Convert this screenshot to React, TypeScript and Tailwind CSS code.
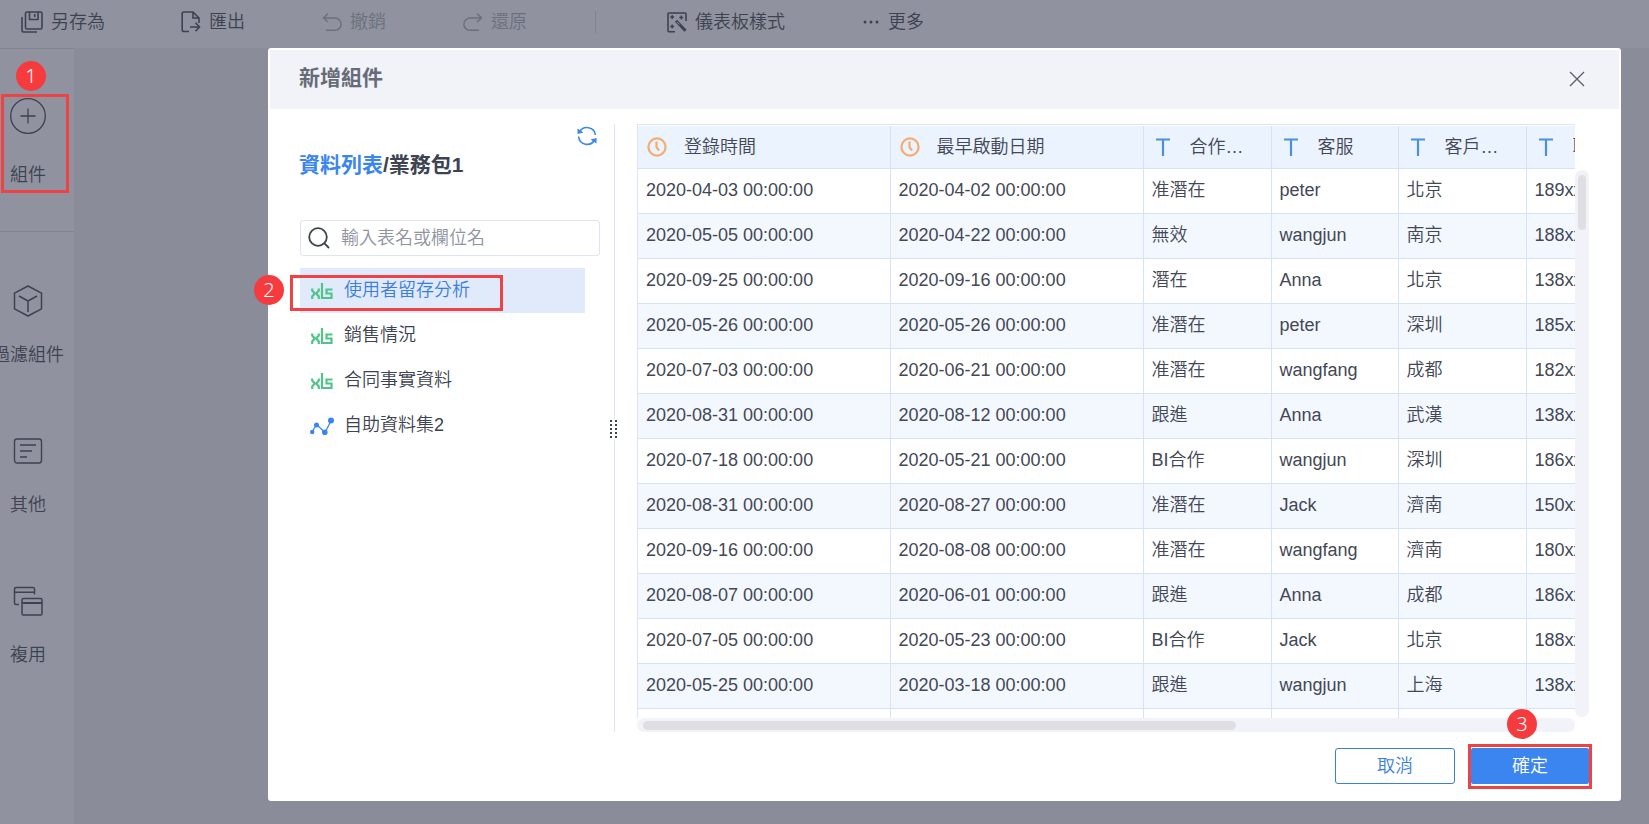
import React from "react";

type Kind = "time" | "text";

const columns: { label: string; kind: Kind }[] = [
  { label: "登錄時間", kind: "time" },
  { label: "最早啟動日期", kind: "time" },
  { label: "合作狀態", kind: "text" },
  { label: "客服", kind: "text" },
  { label: "客戶城市", kind: "text" },
  { label: "聯繫方式", kind: "text" },
];

const rows: string[][] = [
  ["2020-04-03 00:00:00", "2020-04-02 00:00:00", "准潛在", "peter", "北京", "189xxxx"],
  ["2020-05-05 00:00:00", "2020-04-22 00:00:00", "無效", "wangjun", "南京", "188xxxx"],
  ["2020-09-25 00:00:00", "2020-09-16 00:00:00", "潛在", "Anna", "北京", "138xxxx"],
  ["2020-05-26 00:00:00", "2020-05-26 00:00:00", "准潛在", "peter", "深圳", "185xxxx"],
  ["2020-07-03 00:00:00", "2020-06-21 00:00:00", "准潛在", "wangfang", "成都", "182xxxx"],
  ["2020-08-31 00:00:00", "2020-08-12 00:00:00", "跟進", "Anna", "武漢", "138xxxx"],
  ["2020-07-18 00:00:00", "2020-05-21 00:00:00", "BI合作", "wangjun", "深圳", "186xxxx"],
  ["2020-08-31 00:00:00", "2020-08-27 00:00:00", "准潛在", "Jack", "濟南", "150xxxx"],
  ["2020-09-16 00:00:00", "2020-08-08 00:00:00", "准潛在", "wangfang", "濟南", "180xxxx"],
  ["2020-08-07 00:00:00", "2020-06-01 00:00:00", "跟進", "Anna", "成都", "186xxxx"],
  ["2020-07-05 00:00:00", "2020-05-23 00:00:00", "BI合作", "Jack", "北京", "188xxxx"],
  ["2020-05-25 00:00:00", "2020-03-18 00:00:00", "跟進", "wangjun", "上海", "138xxxx"],
  ["", "", "", "", "", ""],
];

function SaveAsIcon() {
  return (
    <svg width="22" height="22" viewBox="0 0 22 22" fill="none" stroke="currentColor" strokeWidth="1.6">
      <rect x="4.5" y="1" width="16.5" height="17" rx="1.5" />
      <path d="M8.5 1v7.5h8.500V1M13.700 3v3M1 6v13.500q0 1.500 1.500 1.500H16" />
    </svg>
  );
}

function ExportIcon() {
  return (
    <svg width="20" height="22" viewBox="0 0 20 22" fill="none" stroke="currentColor" strokeWidth="1.6">
      <path d="M8 20.500H3Q1.200 20.500 1.200 19V2.500Q1.200 1 3 1H12L18 7v5M12 1v6h6M9 16h9.500M14.500 11.800l4 4.200-4 4.200" />
    </svg>
  );
}

function UndoIcon() {
  return (
    <svg width="20" height="20" viewBox="0 0 20 20" fill="none" stroke="currentColor" strokeWidth="1.500">
      <path d="M6 1.500L1.500 6L6 10M1.500 6H13a6 6 0 0 1 0 12.300H4" />
    </svg>
  );
}

function RedoIcon() {
  return (
    <svg width="20" height="20" viewBox="0 0 20 20" fill="none" stroke="currentColor" strokeWidth="1.500">
      <path d="M14 1.500L18.500 6L14 10M18.500 6H7a6 6 0 0 0 0 12.300H16" />
    </svg>
  );
}

function StyleIcon() {
  return (
    <svg width="20" height="21" viewBox="0 0 20 21" fill="none" stroke="currentColor" strokeWidth="1.600">
      <path d="M8 19.800H2Q1 19.800 1 18.800V2Q1 1 2 1H18Q19 1 19 2V9" />
      <path d="M5.200 3v4M3.200 5h4M14.300 3.500v4M12.300 5.500h4M5.200 12.500v4M3.200 14.500h4" strokeWidth="1.400" />
      <path d="M9 8.800L18.500 18.800" strokeWidth="3" />
      <path d="M10 9.800l2.500 2.600" stroke="#90939f" strokeWidth="1" />
    </svg>
  );
}

function MoreIcon() {
  return (
    <svg width="17" height="20" viewBox="0 0 17 20" fill="currentColor">
      <circle cx="2" cy="10" r="1.500" />
      <circle cx="8" cy="10" r="1.500" />
      <circle cx="14" cy="10" r="1.500" />
    </svg>
  );
}

function PlusCircleIcon() {
  return (
    <svg width="36" height="36" viewBox="0 0 36 36" fill="none" stroke="currentColor" strokeWidth="1.300">
      <circle cx="18" cy="18" r="17.300" />
      <path d="M10.500 18h15M18 10.500v15" />
    </svg>
  );
}

function CubeIcon() {
  return (
    <svg width="30" height="32" viewBox="0 0 30 32" fill="none" stroke="currentColor" strokeWidth="1.500" strokeLinejoin="round">
      <path d="M15 1L28.500 8.200V23.800L15 31L1.500 23.800V8.200Z" />
      <path d="M6 11l9 5 9-5M15 16v11" />
    </svg>
  );
}

function NoteIcon() {
  return (
    <svg width="30" height="32" viewBox="0 0 30 32" fill="none" stroke="currentColor" strokeWidth="1.400">
      <rect x="1.500" y="4" width="27" height="24" rx="2.500" />
      <path d="M7 10h16M7 16h12M7 22h7" />
    </svg>
  );
}

function ReuseIcon() {
  return (
    <svg width="30" height="32" viewBox="0 0 30 32" fill="none" stroke="currentColor" strokeWidth="1.500">
      <path d="M6 19.500H3Q1.500 19.500 1.500 18V4Q1.500 2.500 3 2.500H20Q21.500 2.500 21.500 4V9.500M1.500 7.200H21.500" />
      <rect x="9" y="13.500" width="20" height="16.500" rx="1.500" />
      <path d="M9 18H29" strokeWidth="2" />
    </svg>
  );
}

function RefreshIcon() {
  return (
    <svg width="20" height="20" viewBox="0 0 20 20" fill="none" stroke="#3b85ee" strokeWidth="1.600">
      <path d="M2.500 6A8.500 8.500 0 0 1 18.400 9M17.500 14A8.500 8.500 0 0 1 1.600 10.500" />
      <path d="M0.500 2.500V8L6.500 6.500ZM19.500 17.500V12L13.500 13.500Z" fill="#3b85ee" stroke="none" />
    </svg>
  );
}

function SearchIcon() {
  return (
    <svg width="22" height="22" viewBox="0 0 22 22" fill="none" stroke="#3d4351" strokeWidth="1.800">
      <circle cx="10" cy="10" r="8.800" />
      <path d="M16.200 16.200L21 21" />
    </svg>
  );
}

function XlsIcon() {
  return (
    <svg width="24" height="18" viewBox="0 0 24 18" fill="none" stroke="#50c48a" strokeWidth="2.200">
      <path d="M2.200 6.500V8.500L4.800 11.500L2.200 14.500V17M8.800 6.500V8.500L6.200 11.500L8.800 14.500V17M4 11.500H7" />
      <path d="M12 1V16H14.500" />
      <path d="M22.500 7.500H16.500V11.500H21.500V16H14" />
    </svg>
  );
}

function FlowIcon() {
  return (
    <svg width="24" height="18" viewBox="0 0 24 18" fill="#3b85ee" stroke="#3b85ee">
      <path d="M2 15L6.500 7.500L15 15.500L21 4" fill="none" strokeWidth="1.300" />
      <g stroke="none">
        <circle cx="2.200" cy="15" r="2.200" />
        <circle cx="6.500" cy="8" r="2.500" />
        <circle cx="14.800" cy="15.200" r="2.800" />
        <circle cx="21" cy="3.500" r="3" />
      </g>
    </svg>
  );
}

function ClockIcon() {
  return (
    <svg className="shrink-0" width="20" height="20" viewBox="0 0 20 20" fill="none" stroke="#f3ac72">
      <circle cx="10" cy="10" r="8.600" strokeWidth="2.200" />
      <path d="M9.500 4.500V10.200L12 13.500" strokeWidth="2.200" />
    </svg>
  );
}

function TextIcon() {
  return (
    <svg className="shrink-0" width="20" height="20" viewBox="0 0 20 20" fill="none" stroke="#4a8fe0" strokeWidth="2.200">
      <path d="M3 2.500H17M10 2.500V19" />
    </svg>
  );
}

function CloseIcon() {
  return (
    <svg width="16" height="16" viewBox="0 0 16 16" fill="none" stroke="#5c616d" strokeWidth="1.400">
      <path d="M1 1L15 15M15 1L1 15" />
    </svg>
  );
}

function Badge({ n, className }: { n: number; className: string }) {
  return (
    <span
      className={`absolute z-20 flex size-[30px] items-center justify-center rounded-full bg-[#f63b3f] font-['Noto_Sans'] text-xl leading-none text-white ${className}`}
    >
      {n}
    </span>
  );
}

function ToolButton({ icon, label, disabled, className = "" }: { icon: React.ReactNode; label: string; disabled?: boolean; className?: string }) {
  return (
    <button type="button" disabled={disabled} className={`flex h-6 items-center gap-2 whitespace-nowrap disabled:text-[#6c707c] ${className}`}>
      {icon}
      {label}
    </button>
  );
}

function SideButton({ icon, label, className }: { icon: React.ReactNode; label: string; className: string }) {
  return (
    <button type="button" className={`flex w-14 flex-col items-center justify-between whitespace-nowrap ${className}`}>
      {icon}
      <span className="flex w-full justify-center leading-6">{label}</span>
    </button>
  );
}

const sources = [
  { label: "使用者留存分析", icon: <XlsIcon />, selected: true },
  { label: "銷售情況", icon: <XlsIcon />, selected: false },
  { label: "合同事實資料", icon: <XlsIcon />, selected: false },
  { label: "自助資料集2", icon: <FlowIcon />, selected: false },
];

export default function App() {
  return (
    <div className="relative flex min-h-screen flex-col overflow-hidden bg-[#8a8c99] font-['Liberation_Sans','Noto_Sans_CJK_TC',sans-serif] text-lg font-[350] text-[#3d4250]">
      <header className="flex h-12 items-center bg-[#90939f] pb-1 pl-[21px]">
        <ToolButton icon={<SaveAsIcon />} label="另存為" />
        <ToolButton icon={<ExportIcon />} label="匯出" className="ml-[76px]" />
        <ToolButton icon={<UndoIcon />} label="撤銷" disabled className="ml-[77px]" />
        <ToolButton icon={<RedoIcon />} label="還原" disabled className="ml-[77px]" />
        <span className="ml-[68px] h-[22px] w-px bg-[#7f828f]" />
        <ToolButton icon={<StyleIcon />} label="儀表板樣式" className="ml-[71px]" />
        <ToolButton icon={<MoreIcon />} label="更多" className="ml-[78px]" />
      </header>

      <div className="flex flex-1">
        <nav className="w-[74px] border-t border-[#7f828f] bg-[#90939f]">
          <div className="h-[183px] border-b border-[#7f828f] pt-[49px]">
            <SideButton icon={<PlusCircleIcon />} label="組件" className="h-[89px]" />
          </div>
          <div className="flex flex-col gap-[68px] pt-[53px]">
            <SideButton icon={<CubeIcon />} label="過濾組件" className="h-[82px]" />
            <SideButton icon={<NoteIcon />} label="其他" className="h-[82px]" />
            <SideButton icon={<ReuseIcon />} label="複用" className="h-[82px]" />
          </div>
        </nav>
        <main className="flex-1" />
      </div>

      <div className="absolute top-[94px] left-px h-[99px] w-[68px] border-[3px] border-[#ee4345]" />
      <Badge n={1} className="top-[61px] left-4" />

      <div className="absolute inset-0 flex pt-12 pr-7 pb-[23px] pl-[268px]">
        <section role="dialog" aria-labelledby="dialog-title" className="relative flex min-w-0 flex-1 flex-col rounded-[3px] bg-white px-0.5">
          <Badge n={2} className="top-[227px] left-[-14px]" />
          <header className="mt-0.5 flex h-[59px] shrink-0 items-center justify-between bg-[#f1f3f8] pr-[34px] pb-0.5 pl-[29px]">
            <h2 id="dialog-title" className="text-[21px] font-bold text-[#666b78]">新增組件</h2>
            <button type="button" aria-label="關閉"><CloseIcon /></button>
          </header>

          <div className="flex min-h-0 flex-1 pt-[15px] pr-[30px] pl-[29px]">
            <aside className="flex w-[315px] shrink-0 flex-col">
              <div className="flex h-5 justify-end pt-0.5 pr-[17px]">
                <button type="button" aria-label="重新整理" className="size-5"><RefreshIcon /></button>
              </div>
              <h3 className="mt-[5px] text-[21px] leading-8 font-bold text-[#3d4351]">
                <a href="#list" className="text-[#3b85ee]">資料列表</a>/業務包1
              </h3>
              <label className="mt-[39px] mr-3.5 ml-px flex h-9 items-center gap-[11px] rounded-[3px] border border-[#dfe4f2] pl-[7px]">
                <SearchIcon />
                <input type="text" aria-label="輸入表名或欄位名" placeholder="輸入表名或欄位名" className="min-w-0 flex-1 outline-none placeholder:text-[#8f949f]" />
              </label>
              <ul className="relative mt-3 mr-[29px] ml-px">
                {sources.map((s) => (
                  <li key={s.label}>
                    <button
                      type="button"
                      className={`flex h-[45px] w-full items-center gap-2.5 pl-2.5 text-left ${s.selected ? "bg-[#e1eafb] text-[#3b7fdc]" : "text-[#3d4351]"}`}
                    >
                      {s.icon}
                      <span className="pb-0.5">{s.label}</span>
                    </button>
                  </li>
                ))}
                <li aria-hidden="true" className="absolute top-[7px] left-[-10px] h-9 w-[213px] border-[3px] border-[#ee4345]" />
              </ul>
            </aside>

            <div className="relative h-[608px] w-px shrink-0 bg-[#dfe4f2]">
              <svg className="absolute top-[295px] left-[-5px]" width="9" height="20" viewBox="0 0 9 20" fill="#3d4351">
                <rect width="9" height="20" fill="#fff" />
                {[1, 5, 9, 13, 17].map((y) => (
                  <g key={y}>
                    <rect x="1" y={y} width="2" height="2" />
                    <rect x="6" y={y} width="2" height="2" />
                  </g>
                ))}
              </svg>
            </div>

            <div className="ml-[22px] flex h-[608px] min-w-0 flex-1">
              <div className="flex min-w-0 flex-1 flex-col">
                <div className="min-h-0 flex-1 overflow-hidden border-t border-l border-[#dbe5f7] pt-px">
                  <table className="w-[1015px] table-fixed border-collapse text-[#434856]">
                    <colgroup>
                      <col className="w-[252px]" />
                      <col className="w-[253px]" />
                      <col className="w-[128px]" />
                      <col className="w-[127px]" />
                      <col className="w-[128px]" />
                      <col className="w-[127px]" />
                    </colgroup>
                    <thead>
                      <tr className="h-[42px] bg-[#ebf3fe]">
                        {columns.map((c) => (
                          <th key={c.label} scope="col" className="border-r border-b border-[#d5e2f7] p-0 pr-5 pl-[9px] text-left font-[350]">
                            <span className="flex items-center gap-[17px]">
                              {c.kind === "time" ? <ClockIcon /> : <TextIcon />}
                              <span className="truncate">{c.label}</span>
                            </span>
                          </th>
                        ))}
                      </tr>
                    </thead>
                    <tbody>
                      {rows.map((r, i) => (
                        <tr key={i} className="h-[45px] even:bg-[#f3f7fe]">
                          {r.map((v, j) => (
                            <td key={j} className="border-r border-b border-[#d5e2f7] p-0 pb-0.5 pl-2 whitespace-nowrap">{v}</td>
                          ))}
                        </tr>
                      ))}
                    </tbody>
                  </table>
                </div>
                <div className="flex h-3.5 shrink-0 items-center rounded-full bg-[#f2f3f8] px-1.5">
                  <div className="h-[9px] w-[64%] rounded-full bg-[#dedee3]" />
                </div>
              </div>
              <div className="mt-[46px] mb-[15px] w-3.5 rounded-full bg-[#f2f3f8] px-[3px] pt-[5px]">
                <div className="h-[55px] rounded-full bg-[#dedee3]" />
              </div>
            </div>
          </div>

          <footer className="flex h-[69px] shrink-0 items-start justify-end gap-4 pt-4 pr-[30px]">
            <button type="button" className="h-9 w-[120px] rounded-[3px] border border-[#3b7fdc] text-[#3b7fdc]">取消</button>
            <div className="relative">
              <button type="button" className="h-9 w-[118px] rounded-[2px] bg-[#3b85f0] text-white">確定</button>
              <div className="pointer-events-none absolute -top-1 left-[-3px] h-[45px] w-[124px] border-[3px] border-[#ee4345]" />
              <Badge n={3} className="top-[-39px] left-9" />
            </div>
          </footer>
        </section>
      </div>
    </div>
  );
}
